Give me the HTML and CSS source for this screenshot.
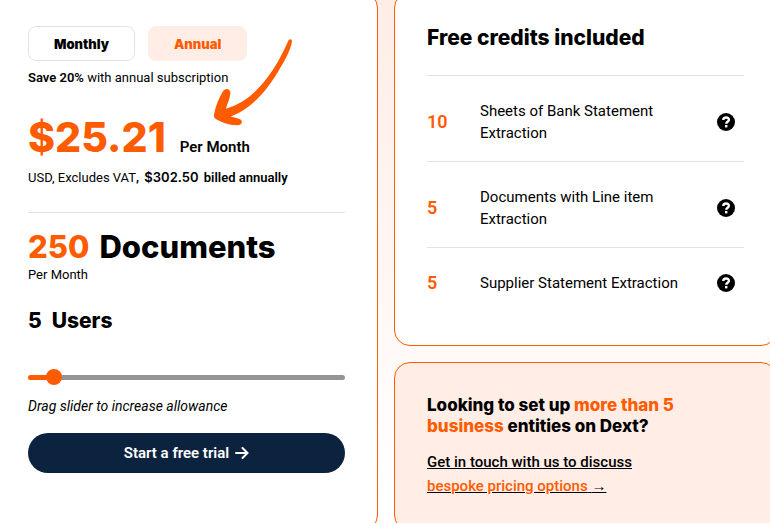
FILE: index.html
```html
<!DOCTYPE html>
<html lang="en">
<head>
<meta charset="utf-8">
<meta name="viewport" content="width=device-width, initial-scale=1">
<title>Pricing</title>
<link rel="stylesheet" href="styles.css">
</head>
<body>
<main class="pricing">
  <section class="card plan">
    <div class="toggle">
      <button class="toggle-option" type="button">Monthly</button>
      <button class="toggle-option active" type="button">Annual</button>
    </div>
    <p class="note"><strong>Save 20%</strong> with annual subscription</p>
    <svg class="arrow" viewBox="0 0 80 88" aria-hidden="true"><path d="M75.500 1.300C76.500 -0.500 79.200 0 79 2.500C77.500 11 73 19.500 67.500 28.500C56 49 40 69 17.700 77.500C21 78.500 24.500 79 27.500 80.500C30.500 83 28.500 86.300 24 86.300C15.500 86 8 83.500 2.500 79.800C1 78.500 0.800 77 1 75.500C2.500 67 6 59 10 52.300C13 48 18 50.500 17.300 54.500C17 60 14 65 13 69.700C41 61.500 60.500 35.500 75.500 1.300Z"/></svg>
    <p class="price"><span class="amount">$25.21</span><span class="period">Per Month</span></p>
    <p class="note billing">USD, Excludes VAT<strong>, <span class="total">$302.50</span> billed annually</strong></p>
    <hr class="rule">
    <h2 class="documents"><span class="accent">250</span><span>Documents</span></h2>
    <p class="note">Per Month</p>
    <h3 class="users"><span>5</span><label for="allowance">Users</label></h3>
    <input class="slider" id="allowance" type="range" min="0" max="100" value="6">
    <p class="hint">Drag slider to increase allowance</p>
    <a class="cta" href="#">Start a free trial
      <svg class="cta-arrow" viewBox="0 0 14 12" aria-hidden="true"><path d="M1 6H12.500M7.500 1L12.500 6L7.500 11"/></svg>
    </a>
  </section>
  <div class="side">
    <section class="card credits">
      <h2 class="title">Free credits included</h2>
      <ul class="credit-list">
        <li class="credit"><span class="count">10</span><span class="name">Sheets of Bank Statement Extraction</span><button class="help" type="button" aria-label="Help">
          <svg viewBox="0 0 18 18"><circle cx="9" cy="9" r="9"/><path d="M6.300 7C6.400 3.600 11.900 3.700 11.900 6.700C11.900 8.700 9.200 8.700 9.200 10.800"/><path d="M9.200 12V14.400"/></svg></button></li>
        <li class="credit"><span class="count">5</span><span class="name">Documents with Line item Extraction</span><button class="help" type="button" aria-label="Help">
          <svg viewBox="0 0 18 18"><circle cx="9" cy="9" r="9"/><path d="M6.300 7C6.400 3.600 11.900 3.700 11.900 6.700C11.900 8.700 9.200 8.700 9.200 10.800"/><path d="M9.200 12V14.400"/></svg></button></li>
        <li class="credit"><span class="count">5</span><span class="name">Supplier Statement Extraction</span><button class="help" type="button" aria-label="Help">
          <svg viewBox="0 0 18 18"><circle cx="9" cy="9" r="9"/><path d="M6.300 7C6.400 3.600 11.900 3.700 11.900 6.700C11.900 8.700 9.200 8.700 9.200 10.800"/><path d="M9.200 12V14.400"/></svg></button></li>
      </ul>
    </section>
    <section class="card bespoke">
      <h2 class="question">Looking to set up <span class="accent">more than 5 business</span> entities on Dext?</h2>
      <a class="contact" href="#">Get in touch with us to discuss <br><span class="accent">bespoke pricing options</span> <span class="contact-arrow">→</span></a>
    </section>
  </div>
</main>
</body>
</html>
```
FILE: styles.css
```css
* {
  box-sizing: border-box;
}

body {
  margin: 0;
  height: 100vh;
  overflow: hidden;
  display: flow-root;
  background: linear-gradient(#ffede6, #ffffff 500px);
  color: #000;
  font-family: Roboto, "Liberation Sans", sans-serif;
  font-size: 14px;
  line-height: 20px;
}

h2, h3, p, ul {
  margin: 0;
  padding: 0;
}

.pricing {
  display: grid;
  grid-template-columns: 1fr 1fr;
  gap: 16px;
  margin: -8px -7px 0 -5px;
}

.card {
  position: relative;
  padding: 32px;
  border: 1px solid #ff5b00;
  border-radius: 16px;
  background: #fff;
}

.accent {
  color: #ff5b00;
}

.plan {
  display: flex;
  flex-direction: column;
  padding-bottom: 55px;
}

.toggle {
  display: flex;
  gap: 13px;
  margin: 1px 0 7px;
}

.toggle-option {
  height: 35px;
  padding: 0 25px;
  border: 1px solid #e1e3e8;
  border-radius: 8px;
  background: #fff;
  color: #000;
  font: 900 13px Inter, sans-serif;
}

.toggle-option.active {
  border-color: #ffede6;
  background: #ffede6;
  color: #ff5b00;
}

.note {
  font-size: 13px;
}

.note strong {
  font-weight: 600;
}

.arrow {
  position: absolute;
  top: 46px;
  left: 217px;
  width: 80px;
  height: 88px;
  fill: #ff5b00;
}

.price {
  display: flex;
  align-items: baseline;
  gap: 14px;
  margin: 25px 0 6px;
}

.amount {
  color: #ff5b00;
  font: 800 41px/48px Inter, sans-serif;
}

.period {
  font-size: 15px;
  font-weight: 600;
}

.total {
  padding: 0 2px;
  font-family: Inter, sans-serif;
}

.rule {
  width: 100%;
  margin: 24px 0 16px;
  border: 0;
  border-top: 1px solid #e1e1e6;
}

.documents {
  display: flex;
  gap: 10px;
  font: 800 31px/36px Inter, sans-serif;
}

.users {
  display: flex;
  gap: 10px;
  margin: 24px 0 36px;
  font: 800 21px/24px Inter, sans-serif;
}

.slider {
  appearance: none;
  width: 100%;
  height: 16px;
  margin: 0;
  background: none;
}

.slider::-webkit-slider-runnable-track {
  height: 5px;
  border-radius: 3px;
  background: linear-gradient(to right, #ff5b00 8%, #959595 8%);
}

.slider::-webkit-slider-thumb {
  appearance: none;
  width: 16px;
  height: 16px;
  margin-top: -6px;
  border-radius: 50%;
  background: #ff5b00;
}

.hint {
  margin: 11px 0 17px;
  font-style: italic;
}

.cta {
  display: flex;
  align-items: center;
  justify-content: center;
  gap: 6px;
  height: 40px;
  border-radius: 20px;
  background: #0c2340;
  color: #fff;
  font-size: 15px;
  font-weight: 600;
  text-decoration: none;
}

.cta-arrow {
  width: 14px;
  height: 12px;
  fill: none;
  stroke: #fff;
  stroke-width: 2;
  stroke-linecap: round;
}

.side {
  display: flex;
  flex-direction: column;
  gap: 16px;
}

.credits {
  padding-bottom: 34px;
}

.title {
  margin-bottom: 24px;
  font: 800 21px/26px Inter, sans-serif;
}

.credit-list {
  list-style: none;
}

.credit {
  display: grid;
  grid-template-columns: 53px 1fr 18px;
  align-items: center;
  padding: 24px 9px 17px 0;
  border-top: 1px solid #e3e3e3;
  font-size: 15px;
  line-height: 22px;
}

.name {
  padding-right: 24px;
}

.count {
  color: #ff5b00;
  font-size: 18px;
  font-weight: 600;
}

.help {
  width: 18px;
  height: 18px;
  padding: 0;
  border: 0;
  background: none;
}

.help svg {
  display: block;
  fill: none;
  stroke: #fff;
  stroke-width: 2.4;
}

.help circle {
  fill: #000;
  stroke: none;
}

.bespoke {
  flex: 1;
  background: #ffede6;
}

.question {
  margin-bottom: 14px;
  font: 800 17px/21px Inter, sans-serif;
}

.contact {
  display: block;
  color: #000;
  font-size: 15px;
  font-weight: 500;
  line-height: 23px;
}

.contact-arrow {
  font-family: "Liberation Sans", sans-serif;
  font-weight: 700;
}
```
